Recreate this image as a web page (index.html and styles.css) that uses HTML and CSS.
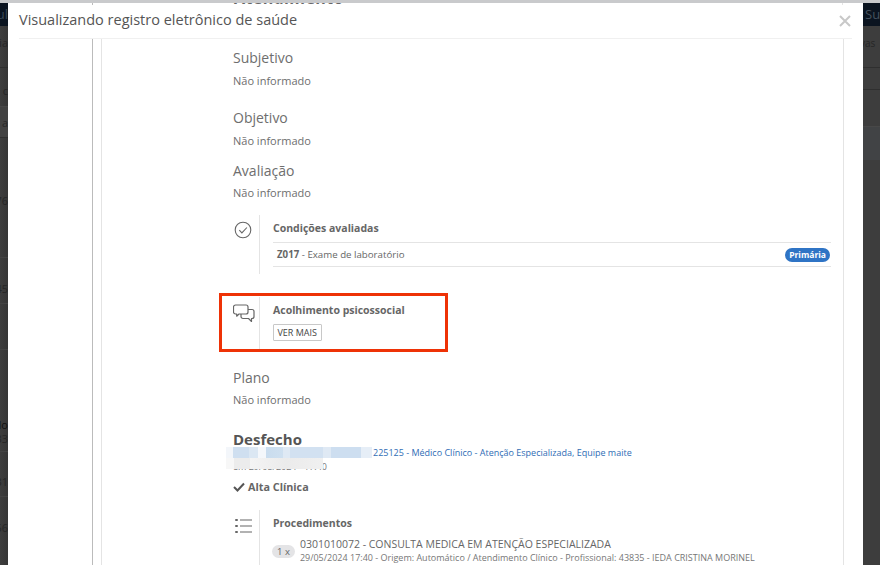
FILE: index.html
```html
<!DOCTYPE html>
<html lang="pt-BR">
<head>
<meta charset="UTF-8" />
<title>Visualizando registro eletrônico de saúde</title>
<link rel="stylesheet" href="styles.css">
</head>
<body>
<div class="browser-strip"></div>
<div class="page">
  <aside class="backdrop backdrop-left">
    <div class="bg-topbar"><span class="bg-cut-right">ul</span></div>
    <div class="bg-row bg-row-first"><span class="bg-cut-right">ia</span></div>
    <div class="bg-row bg-row-c"><span class="bg-cut-right">c</span></div>
    <div class="bg-row bg-row-active"><span class="bg-cut-right">a</span></div>
    <div class="bg-row bg-row-76"><span class="bg-cut-right">76</span></div>
    <div class="bg-row bg-row-45"><span class="bg-cut-right">45</span></div>
    <div class="bg-row bg-row-empty"></div>
    <div class="bg-row bg-row-33"><span class="bg-cut-right bg-light">lo</span><span class="bg-cut-right">33</span></div>
    <div class="bg-row bg-row-31"><span class="bg-cut-right">31</span></div>
    <div class="bg-row bg-row-56"><span class="bg-cut-right">56</span></div>
  </aside>

  <main class="modal">
    <div class="peek"><span class="peek-text">Atendimento</span></div>
    <header class="modal-header">
      <h1 class="modal-title">Visualizando registro eletrônico de saúde</h1>
      <button class="modal-close" aria-label="Fechar">
        <svg width="12" height="12" viewBox="0 0 12 12"><path d="M1 1l10 10M11 1L1 11" stroke="#c8c8c8" stroke-width="2" fill="none"/></svg>
      </button>
    </header>

    <div class="modal-body">
      <div class="timeline">
        <div class="record">
          <section class="soap soap-subjetivo">
            <h2 class="soap-title">Subjetivo</h2>
            <p class="soap-text">Não informado</p>
          </section>
          <section class="soap soap-objetivo">
            <h2 class="soap-title">Objetivo</h2>
            <p class="soap-text">Não informado</p>
          </section>
          <section class="soap soap-avaliacao">
            <h2 class="soap-title">Avaliação</h2>
            <p class="soap-text">Não informado</p>
          </section>

          <section class="info-block block-condicoes">
            <div class="info-icon">
              <svg width="18" height="18" viewBox="0 0 18 18" fill="none" stroke="#666" stroke-width="1.1"><circle cx="9" cy="9" r="7.8"/><path d="M5.3 9.2l2.6 2.7 5-5.4"/></svg>
            </div>
            <div class="info-content">
              <h3 class="info-title">Condições avaliadas</h3>
              <div class="condition-row">
                <span><b>Z017</b> - Exame de laboratório</span>
                <span class="badge">Primária</span>
              </div>
            </div>
          </section>

          <section class="info-block block-acolhimento">
            <div class="info-icon">
              <svg width="22" height="21" viewBox="0 0 22 21" fill="none" stroke="#666" stroke-width="1.2" stroke-linejoin="round"><path d="M2.5 1h10.500a2 2 0 0 1 2 2v5a2 2 0 0 1-2 2h-7l-2.300 2.200v-2.200h-1.200a2 2 0 0 1-2-2v-5a2 2 0 0 1 2-2z"/><path d="M15 5.500h4a2 2 0 0 1 2 2v5a2 2 0 0 1-2 2h-.5v3l-3-3h-5.500a2 2 0 0 1-2-2v-2.500"/></svg>
            </div>
            <div class="info-content">
              <h3 class="info-title">Acolhimento psicossocial</h3>
              <button class="btn-more">VER MAIS</button>
            </div>
            <div class="highlight"></div>
          </section>

          <section class="soap soap-plano">
            <h2 class="soap-title">Plano</h2>
            <p class="soap-text">Não informado</p>
          </section>

          <section class="desfecho">
            <h2 class="desfecho-title">Desfecho</h2>
            <p class="desfecho-link"><a>225125 - Médico Clínico - Atenção Especializada, Equipe maite</a></p>
            <p class="desfecho-date">em 29/05/2024 - 17:40</p>
            <div class="blur-patch">
              <div class="blur-line blur-blue"></div>
              <div class="blur-line blur-gray"></div>
            </div>
            <p class="desfecho-status">
              <svg width="12" height="10" viewBox="0 0 12 10" fill="none" stroke="#555" stroke-width="2"><path d="M1 5l3.500 3.500L11 1.500"/></svg>
              Alta Clínica
            </p>
          </section>

          <section class="info-block block-procedimentos">
            <div class="info-icon">
              <svg width="17" height="14" viewBox="0 0 17 14" fill="#666"><rect x="0" y="0" width="3" height="2" rx="1"/><rect x="0" y="6" width="3" height="2" rx="1"/><rect x="0" y="12" width="3" height="2" rx="1"/><rect x="5" y="0.500" width="12" height="1"/><rect x="5" y="6.500" width="12" height="1"/><rect x="5" y="12.500" width="12" height="1"/></svg>
            </div>
            <div class="info-content">
              <h3 class="info-title">Procedimentos</h3>
              <div class="proc-row">
                <span class="qty">1 x</span>
                <div class="proc-text">
                  <div class="proc-name">0301010072 - CONSULTA MEDICA EM ATENÇÃO ESPECIALIZADA</div>
                  <div class="proc-meta">29/05/2024 17:40 - Origem: Automático / Atendimento Clínico - Profissional: 43835 - IEDA CRISTINA MORINEL</div>
                </div>
              </div>
            </div>
          </section>
        </div>
      </div>
    </div>
  </main>

  <aside class="backdrop backdrop-right">
    <div class="bg-topbar"><span>Su</span></div>
    <div class="bg-row bg-r1"><span>vas</span></div>
    <div class="bg-row bg-r2"></div>
    <div class="bg-row bg-r3"></div>
    <div class="bg-row bg-r4"></div>
  </aside>
</div>
</body>
</html>
```

FILE: styles.css
```css
/* Reset */
* {
  box-sizing: border-box;
}

html, body {
  height: 100%;
}

body {
  margin: 0;
  overflow: hidden;
  font-family: "Open Sans", "Noto Sans", sans-serif;
  color: #666;
  background: #3c3c3c;
}

h1, h2, h3, p {
  margin: 0;
  font-weight: 400;
}

.browser-strip {
  height: 3px;
  background: #c9cacc;
}

.page {
  display: flex;
  height: 562px;
}

/* Dimmed page behind the modal */
.backdrop {
  flex: none;
  overflow: hidden;
  background: linear-gradient(90deg, #3e3e3e, #363636);
  font-size: 11px;
  color: #262626;
  line-height: 14px;
}

.backdrop-left {
  width: 8px;
}

.backdrop-right {
  width: 17px;
  background: #3d3d3d;
}

.bg-topbar {
  height: 23px;
  background: #0b1420;
  color: #3b4a58;
  font-size: 13px;
  line-height: 23px;
  white-space: nowrap;
}

.backdrop-right .bg-topbar span {
  margin-left: 2px;
}

.bg-row {
  border-bottom: 1px solid #2f2f2f;
  white-space: nowrap;
}

.bg-cut-right {
  display: block;
  direction: rtl;
  width: 8px;
  overflow: hidden;
}

.bg-light {
  color: #111;
}

.bg-row-first { height: 42px; padding-top: 10px; }
.bg-row-c { height: 39px; padding-top: 16px; border-bottom-color: #484848; }
.bg-row-active { height: 31px; padding-top: 9px; background: #424242; }
.bg-row-76 { height: 120px; padding-top: 56px; border-bottom-color: #444; }
.bg-row-45 { height: 46px; padding-top: 24px; border-bottom-color: #444; }
.bg-row-empty { height: 46px; border-bottom-color: #444; }
.bg-row-33 { height: 102px; padding-top: 68px; border-bottom-color: #444; }
.bg-row-31 { height: 45px; padding-top: 23px; border-bottom-color: #444; }
.bg-row-56 { height: 46px; padding-top: 24px; border-bottom: 0; }

.backdrop-right .bg-topbar { color: #46525e; }
.backdrop-right .bg-row span { margin-left: -3px; font-size: 10px; }
.bg-r1 { height: 42px; padding-top: 10px; }
.bg-r2 { height: 22px; }
.bg-r3 { height: 37px; border-bottom-color: #484848; }
.bg-r4 { height: 33px; background: #414345; border-bottom: 0; }

/* Modal */
.modal {
  flex: 1;
  min-width: 0;
  display: flex;
  flex-direction: column;
  background: #fff;
}

/* Bottom of the scrolled heading, just visible above the modal header */
.peek {
  flex: none;
  height: 2px;
  margin-left: 84px;
  margin-right: 20px;
  padding-left: 141px;
  border-left: 1px solid #bbb;
  border-right: 1px solid #e4e4e4;
  overflow: hidden;
}

.peek-text {
  display: block;
  margin-top: -12px;
  font-size: 16px;
  line-height: 15px;
  font-weight: 700;
  letter-spacing: 0.4px;
}

.modal-header {
  flex: none;
  height: 34px;
  margin: 0 11px;
  display: flex;
  align-items: center;
  justify-content: space-between;
  border-bottom: 1px solid #f0f0f0;
}

.modal-title {
  font-size: 14.500px;
  color: #555;
  padding-bottom: 4px;
}

.modal-close {
  border: 0;
  padding: 0;
  background: none;
  display: flex;
  margin-right: 1px;
  margin-bottom: 2px;
}

.modal-body {
  flex: 1;
  min-height: 0;
  overflow: hidden;
  padding-left: 84px;
  padding-right: 19px;
}

.timeline {
  height: 100%;
  padding-left: 8px;
  border-left: 1px solid #bbb;
}

.record {
  height: 100%;
  padding-left: 131px;
  padding-right: 12px;
  border-left: 1px solid #e4e4e4;
  border-right: 1px solid #e4e4e4;
}

/* SOAP sections */
.soap-title {
  font-size: 14px;
  line-height: 20px;
  color: #6e6e6e;
}

.soap-text {
  margin-top: 5px;
  font-size: 11px;
  line-height: 16px;
  color: #6e6e6e;
}

.soap-subjetivo { padding-top: 9px; }
.soap-objetivo { padding-top: 19px; }
.soap-avaliacao { padding-top: 12px; }
.soap-avaliacao .soap-text { margin-top: 4px; }
.soap-plano { padding-top: 16px; }
.soap-plano .soap-text { margin-top: 4px; }

/* Blocks with a side icon */
.info-block {
  position: relative;
  display: flex;
}

.info-icon {
  flex: none;
  width: 26px;
  padding-top: 6px;
  padding-left: 1px;
}

.info-content {
  flex: 1;
  min-width: 0;
  border-left: 1px solid #e4e4e4;
  padding-left: 13px;
}

.info-title {
  font-size: 10.500px;
  line-height: 16px;
  font-weight: 700;
  color: #666;
}

.block-condicoes {
  margin-top: 14px;
}

.block-condicoes .info-content {
  height: 59px;
  padding-top: 5px;
}

.condition-row {
  display: flex;
  align-items: center;
  justify-content: space-between;
  height: 25px;
  margin-top: 6px;
  padding: 0 0 0 4px;
  border-top: 1px solid #e4e4e4;
  border-bottom: 1px solid #e4e4e4;
  font-size: 9.700px;
  color: #666;
}

.badge {
  margin-right: 1px;
  padding: 0 4px;
  background: #2f74c5;
  color: #fff;
  border-radius: 8px;
  font-size: 8.500px;
  font-weight: 700;
  line-height: 14px;
}

.block-acolhimento {
  margin-top: 23px;
}

.block-acolhimento .info-icon {
  padding-top: 7px;
  padding-left: 0;
}

.block-acolhimento .info-content {
  height: 55px;
  padding-top: 5px;
}

.btn-more {
  display: block;
  height: 17px;
  margin-top: 6px;
  padding: 0 3.500px;
  background: #fff;
  border: 1px solid #c8c8c8;
  border-radius: 1px;
  font-family: inherit;
  font-size: 9px;
  color: #444;
}

/* Red annotation drawn on the screenshot */
.highlight {
  position: absolute;
  left: -14px;
  top: -4px;
  width: 229px;
  height: 59px;
  border: 3px solid #ee3206;
  pointer-events: none;
}

/* Desfecho */
.desfecho {
  position: relative;
  padding-top: 21px;
}

.desfecho-title {
  font-size: 15px;
  line-height: 20px;
  font-weight: 700;
  color: #555;
}

.desfecho-link {
  margin-top: -3px;
  padding-left: 140px;
  font-size: 9px;
  line-height: 14px;
  color: #2f6db5;
}

.desfecho-date {
  font-size: 9px;
  line-height: 13px;
  color: #777;
}

.blur-patch {
  position: absolute;
  left: -7px;
  top: 39px;
  pointer-events: none;
}

.blur-line.blur-blue {
  width: 146px;
  height: 11px;
  background: linear-gradient(90deg, #f3f6fa 0, #f3f6fa 7px, #cfdff0 7px, #cfdff0 23px, #dbe7f3 23px, #dbe7f3 32px, #f4f7fb 32px, #f4f7fb 40px, #c9dcee 40px, #cfe0f0 57px, #dfe9f4 57px, #dfe9f4 64px, #d2e1f1 64px, #d2e1f1 97px, #dfe9f4 97px, #dfe9f4 105px, #cddef0 105px, #cddef0 135px, #e6eef7 135px);
}

.blur-line.blur-gray {
  width: 97px;
  height: 11px;
  background: linear-gradient(90deg, #f7f7f7 0, #f7f7f7 8px, #ececec 8px, #ececec 24px, #f4f4f4 24px, #ebebeb 60px, #f0f0f0 97px);
}

.desfecho-status {
  display: flex;
  align-items: center;
  gap: 3px;
  margin-top: 6px;
  font-size: 10.800px;
  line-height: 16px;
  font-weight: 700;
  color: #666;
}

.block-procedimentos {
  margin-top: 15px;
}

.block-procedimentos .info-icon {
  padding-top: 6px;
  padding-left: 2px;
}

.block-procedimentos .info-content {
  padding-top: 5px;
  height: 70px;
}

.proc-row {
  display: flex;
  align-items: center;
  gap: 5px;
  margin-top: 6px;
  margin-left: -1px;
}

.qty {
  flex: none;
  padding: 0 5px;
  background: #e4e4e6;
  border-radius: 7px;
  font-size: 9.500px;
  line-height: 13px;
  color: #666;
  margin-top: 2px;
}

.proc-text {
  white-space: nowrap;
}

.proc-name {
  font-size: 10.500px;
  line-height: 14px;
  color: #666;
}

.proc-meta {
  font-size: 9px;
  line-height: 13px;
  color: #777;
}
```
